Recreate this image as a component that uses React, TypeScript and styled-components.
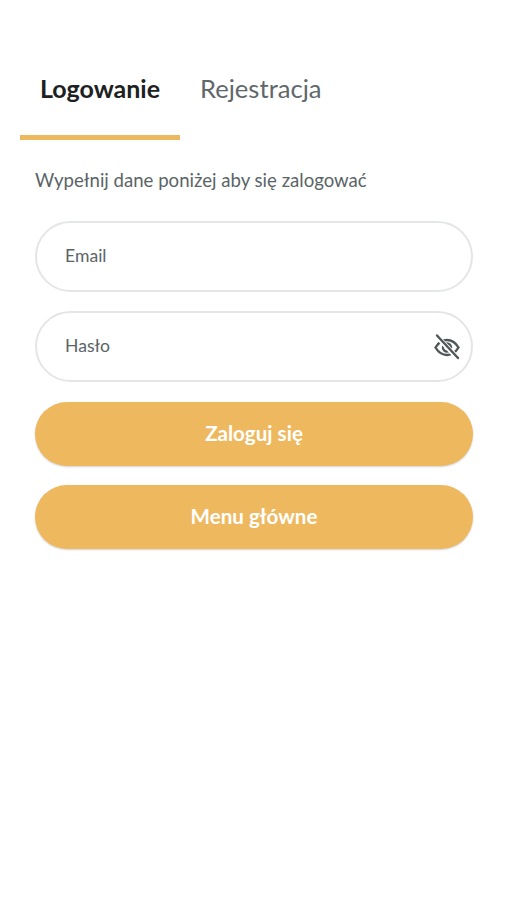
import React from "react";
import styled, { createGlobalStyle } from "styled-components";

const GlobalStyle = createGlobalStyle`
  html, body {
    margin: 0;
    padding: 0;
    background: #ffffff;
  }
  body {
    font-family: "Lato", "Liberation Sans", sans-serif;
  }
`;

const Screen = styled.div`
  width: 507px;
  height: 900px;
  padding: 64px 34px 0 20px;
  box-sizing: border-box;
  overflow: hidden;
`;

const Tabs = styled.div`
  display: flex;
  height: 76px;
`;

const Tab = styled.div<{ $active?: boolean }>`
  width: ${(p) => (p.$active ? "160px" : "auto")};
  box-sizing: border-box;
  padding-top: 8px;
  text-align: center;
  font-size: ${(p) => (p.$active ? "25px" : "25.6px")};
  line-height: 32px;
  font-weight: ${(p) => (p.$active ? 700 : 400)};
  color: ${(p) => (p.$active ? "#1d2122" : "#5f686b")};
  border-bottom: ${(p) => (p.$active ? "5px solid #eeb85f" : "none")};
  margin-right: 20px;
`;

const Form = styled.div`
  padding-left: 15px;
  display: flex;
  flex-direction: column;
`;

const Hint = styled.p`
  margin: 29px 0 30px;
  font-size: 18.6px;
  line-height: 22px;
  color: #5a6467;
`;

const Field = styled.div`
  display: flex;
  align-items: center;
  justify-content: space-between;
  height: 71px;
  box-sizing: border-box;
  padding: 0 10px 0 28px;
  margin-bottom: 19px;
  border: 2.5px solid #e4e6e6;
  border-radius: 36px;
  font-size: 17.6px;
  color: #5a6467;
`;

const FieldLabel = styled.span`
  padding-bottom: 2px;
`;

const Button = styled.button`
  height: 64px;
  margin-bottom: 19px;
  padding: 0 0 3px;
  border: none;
  border-radius: 32px;
  background: #eeb85f;
  box-shadow: 0 1px 2px rgba(0, 0, 0, 0.18);
  color: #ffffff;
  font-family: inherit;
  font-size: 20.6px;
  font-weight: 700;

  ${Field} + & {
    margin-top: 1px;
  }
`;

const EyeOff = () => (
  <svg width="28" height="28" viewBox="0 0 28 28" fill="none" stroke="#505759" strokeWidth="2.4" strokeLinecap="round">
    <path d="M2.5 14.5C5.5 9.5 9.5 7 14 7s8.5 2.5 11.5 7.5C22.5 19.5 18.5 22 14 22S5.5 19.5 2.5 14.5Z" />
    <circle cx="14" cy="14.5" r="4" />
    <path d="M4 3.5 24.5 25" stroke="#ffffff" strokeWidth="5" />
    <path d="M4 2.5 25 25" />
  </svg>
);

export default function App() {
  return (
    <Screen>
      <GlobalStyle />
      <Tabs>
        <Tab $active>Logowanie</Tab>
        <Tab>Rejestracja</Tab>
      </Tabs>
      <Form>
        <Hint>Wypełnij dane poniżej aby się zalogować</Hint>
        <Field>
          <FieldLabel>Email</FieldLabel>
        </Field>
        <Field>
          <FieldLabel>Hasło</FieldLabel>
          <EyeOff />
        </Field>
        <Button type="button">Zaloguj się</Button>
        <Button type="button">Menu główne</Button>
      </Form>
    </Screen>
  );
}
